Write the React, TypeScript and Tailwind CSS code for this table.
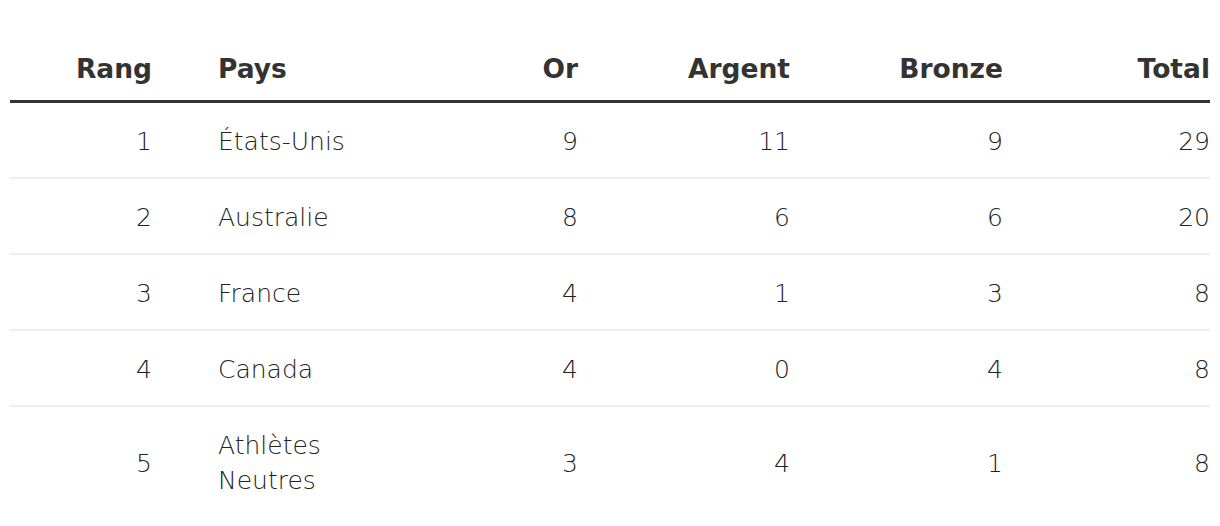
import React from "react";

const rows = [
  { r: 1, p: "États-Unis", o: 9, a: 11, b: 9, t: 29 },
  { r: 2, p: "Australie", o: 8, a: 6, b: 6, t: 20 },
  { r: 3, p: "France", o: 4, a: 1, b: 3, t: 8 },
  { r: 4, p: "Canada", o: 4, a: 0, b: 4, t: 8 },
  { r: 5, p: "Athlètes Neutres", o: 3, a: 4, b: 1, t: 8 },
];

const th = "pt-[49px] pb-[11px] text-right text-[26.5px] leading-[40px] font-bold";
const td = "pt-[21px] pb-[18px] text-right";

export default function App() {
  return (
    <div className="w-[1220px] h-[526px] bg-white overflow-hidden font-['DejaVu_Sans',sans-serif]">
      <table className="ml-[10px] w-[1200px] table-fixed border-collapse text-[#333]">
        <colgroup>
          <col className="w-[142px]" />
          <col className="w-[246px]" />
          <col className="w-[180px]" />
          <col className="w-[212px]" />
          <col className="w-[213px]" />
          <col className="w-[207px]" />
        </colgroup>
        <thead>
          <tr className="border-b-[3px] border-[#333]">
            <th className={th}>Rang</th>
            <th className="pt-[49px] pb-[11px] pl-[66px] text-left text-[26.5px] leading-[40px] font-bold">Pays</th>
            <th className={th}>Or</th>
            <th className={th}>Argent</th>
            <th className={th}>Bronze</th>
            <th className={th}>Total</th>
          </tr>
        </thead>
        <tbody className="text-[25px] leading-[35px] font-extralight text-[#222]">
          {rows.map((row) => (
            <tr key={row.r} className="border-b-2 border-[#eeeeee] last:border-b-0">
              <td className={td}>{row.r}</td>
              <td className="pt-[21px] pb-[18px] pl-[66px] text-left">{row.p}</td>
              <td className={td}>{row.o}</td>
              <td className={td}>{row.a}</td>
              <td className={td}>{row.b}</td>
              <td className={td}>{row.t}</td>
            </tr>
          ))}
        </tbody>
      </table>
    </div>
  );
}
